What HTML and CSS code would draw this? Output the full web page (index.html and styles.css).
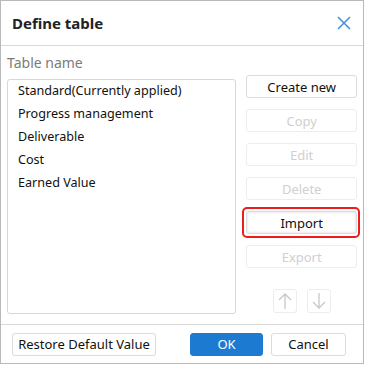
FILE: index.html
```html
<html lang="en">
<head>
    <meta charset="UTF-8">
    <meta name="viewport" content="width=device-width, initial-scale=1.0">
    <title>Define table</title>
    <link rel="stylesheet" href="styles.css">
</head>
<body>
    <div class="dialog">
        <div class="header">
            <h3 class="title">Define table</h3>
            <button class="close" title="Close">
                <svg width="14" height="14" viewBox="0 0 14 14"><path d="M1 1L13 13M13 1L1 13" stroke="#3f8fdc" stroke-width="1.5" fill="none"/></svg>
            </button>
        </div>
        <div class="content">
            <p class="label">Table name</p>
            <div class="main">
                <ul class="list">
                    <li>Standard(Currently applied)</li>
                    <li>Progress management</li>
                    <li>Deliverable</li>
                    <li>Cost</li>
                    <li>Earned Value</li>
                </ul>
                <div class="side">
                    <button class="btn">Create new</button>
                    <button class="btn" disabled>Copy</button>
                    <button class="btn" disabled>Edit</button>
                    <button class="btn" disabled>Delete</button>
                    <button class="btn import">Import<span class="mark"></span></button>
                    <button class="btn" disabled>Export</button>
                    <div class="arrows">
                        <button class="arrow" disabled>
                            <svg width="14" height="16" viewBox="0 0 14 16"><path d="M7 1V16M1 7L7 1L13 7" stroke="#c8c8c8" stroke-width="1.3" fill="none"/></svg>
                        </button>
                        <button class="arrow" disabled>
                            <svg width="14" height="16" viewBox="0 0 14 16"><path d="M7 0V15M1 9L7 15L13 9" stroke="#c8c8c8" stroke-width="1.3" fill="none"/></svg>
                        </button>
                    </div>
                </div>
            </div>
        </div>
        <div class="footer">
            <button class="btn restore">Restore Default Value</button>
            <div class="spacer"></div>
            <button class="btn ok">OK</button>
            <button class="btn cancel">Cancel</button>
        </div>
    </div>
</body>
</html>
```

FILE: styles.css
```css
body {
    margin: 0;
    background-color: #fff;
    font-family: "Noto Sans", "Liberation Sans", sans-serif;
    font-size: 13px;
    color: #111;
}
.dialog {
    width: 362px;
    height: 362px;
    border: 1px solid #b9b9b9;
    display: flex;
    flex-direction: column;
}
.header {
    height: 44px;
    border-bottom: 1px solid #d9d9d9;
    display: flex;
    align-items: center;
    padding: 0 12px 0 11px;
}
.title {
    margin: 0;
    flex: 1;
    font-size: 15px;
    font-weight: bold;
    color: #222;
}
.close {
    border: none;
    background: none;
    padding: 0;
    width: 14px;
    height: 14px;
    display: flex;
}
.content {
    padding: 0 6px 0 6px;
    height: 278px;
    border-bottom: 1px solid #d9d9d9;
}
.label {
    margin: 7px 0 0 0;
    height: 26px;
    font-size: 14px;
    color: #7b7b7b;
}
.main {
    display: flex;
    align-items: flex-start;
}
.list {
    list-style: none;
    margin: 0;
    padding: 0 0 0 10px;
    width: 218px;
    height: 233px;
    border: 1px solid #d8d8d8;
    border-radius: 3px;
    font-size: 12.6px;
}
.list li {
    height: 23px;
    line-height: 21px;
}
.side {
    margin: -4px 0 0 10px;
    width: 111px;
    display: flex;
    flex-direction: column;
    gap: 11px;
}
.btn {
    position: relative;
    height: 23px;
    padding: 0;
    border: 1px solid #dcdcdc;
    border-radius: 3px;
    background: #fff;
    font-family: inherit;
    font-size: 13px;
    color: #111;
}
.btn:disabled {
    border-color: #ededed;
    color: #d0d0d0;
}
.import {
    box-shadow: inset 0 0 3px #d8d8d8;
}
.mark {
    position: absolute;
    left: -5px;
    top: -5px;
    right: -4px;
    bottom: -5px;
    border: 2px solid #ee1c1c;
    border-radius: 5px;
}
.arrows {
    margin-top: 10px;
    display: flex;
    justify-content: center;
    gap: 10px;
}
.arrow {
    width: 24px;
    height: 24px;
    padding: 0;
    border: 1px solid #ededed;
    border-radius: 3px;
    background: #fff;
    display: flex;
    align-items: center;
    justify-content: center;
}
.footer {
    flex: 1;
    display: flex;
    align-items: center;
    padding: 0 17px 0 11px;
    gap: 8px;
}
.restore {
    width: 144px;
}
.spacer {
    flex: 1;
}
.ok {
    width: 73px;
    background: #1c7bd0;
    border-color: #1c7bd0;
    color: #fff;
}
.cancel {
    width: 75px;
}
```
